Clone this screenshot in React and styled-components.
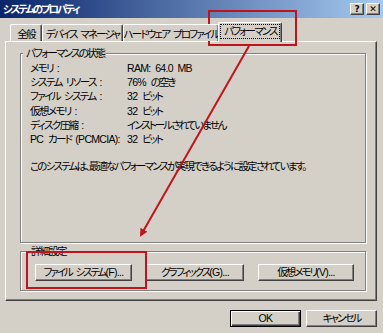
import React from 'react'
import styled, { createGlobalStyle } from 'styled-components'

const Global = createGlobalStyle`
  html, body {
    margin: 0;
    padding: 0;
    background: #d4d0c8;
  }
  body {
    font-family: "Liberation Sans", "Noto Sans CJK JP", sans-serif;
    font-size: 10.5px;
    font-feature-settings: "palt";
    letter-spacing: -1.8px;
    word-spacing: 2.5px;
    color: #000;
  }
`

const Window = styled.div`
  position: relative;
  width: 383px;
  height: 333px;
  background: #d4d0c8;
  overflow: hidden;
`

const TitleBar = styled.div`
  height: 18px;
  display: flex;
  align-items: center;
  justify-content: space-between;
  padding: 0 3px 0 3px;
  background: linear-gradient(to right, #0a246a, #a6caf0);
  color: #fff;
  font-weight: bold;
  font-size: 10.5px;
  letter-spacing: -2.2px;
`

const TitleText = styled.span`
  line-height: 18px;
`

const TitleButtons = styled.div`
  display: flex;
  gap: 2px;
`

const TitleButton = styled.div`
  width: 14px;
  height: 12px;
  box-sizing: border-box;
  background: #d4d0c8;
  border-top: 1px solid #fff;
  border-left: 1px solid #fff;
  border-right: 1px solid #404040;
  border-bottom: 1px solid #404040;
  box-shadow: inset -1px -1px 0 #808080;
  color: #000;
  font-family: "DejaVu Sans", sans-serif;
  font-size: 9px;
  font-weight: bold;
  letter-spacing: 0;
  line-height: 10px;
  text-align: center;
`

const TabRow = styled.div`
  display: flex;
  align-items: flex-end;
  height: 19px;
  margin-top: 4px;
  padding-left: 10px;
  position: relative;
  z-index: 1;
`

const Tab = styled.div`
  box-sizing: border-box;
  width: ${p => p.$w}px;
  height: ${p => (p.$active ? 20 : 17)}px;
  margin-bottom: ${p => (p.$active ? -1 : 0)}px;
  margin-left: ${p => (p.$active ? -1 : 0)}px;
  background: #d4d0c8;
  border-top: 1px solid #fff;
  border-left: 1px solid #fff;
  border-right: 1px solid #404040;
  border-radius: 2px 2px 0 0;
  box-shadow: inset -1px 0 0 #808080;
  display: flex;
  align-items: center;
  justify-content: center;
  padding-bottom: ${p => (p.$active ? 2 : 0)}px;
  white-space: nowrap;
`

const Focus = styled.span`
  outline: 1px dotted #000;
  outline-offset: 0;
  padding: 0 2px 0 3px;
  line-height: 13px;
`

const Panel = styled.div`
  box-sizing: border-box;
  width: 372px;
  margin-left: 5px;
  padding: 4px 10px 9px 14px;
  border-top: 1px solid #fff;
  border-left: 1px solid #fff;
  border-right: 1px solid #404040;
  border-bottom: 1px solid #404040;
  box-shadow: inset -1px -1px 0 #808080;
`

const Group = styled.fieldset`
  box-sizing: border-box;
  margin: ${p => p.$top}px 0 0;
  height: ${p => p.$h}px;
  padding: ${p => p.$pad};
  border: 1px solid #808080;
  box-shadow: 1px 1px 0 #fff, inset 1px 1px 0 #fff;
  min-width: 0;
`

const Legend = styled.legend`
  padding: 0 2px 0 3px;
  margin-left: -7px;
  line-height: 14px;
  background: #d4d0c8;
`

const StatusGrid = styled.div`
  display: grid;
  grid-template-columns: 97px 1fr;
  line-height: 14.2px;
`

const Label = styled.span`
  letter-spacing: -1.6px;
  white-space: nowrap;
`

const Value = styled.span`
  letter-spacing: -2px;
  white-space: nowrap;
`

const Latin = styled.span`
  letter-spacing: -0.7px;
`

const Message = styled.div`
  margin-top: 13px;
  line-height: 14px;
  letter-spacing: -1.8px;
  white-space: nowrap;
`

const ButtonRow = styled.div`
  display: flex;
  justify-content: ${p => p.$justify};
  gap: 5px;
`

const Button = styled.div`
  box-sizing: border-box;
  width: ${p => p.$w}px;
  height: 17px;
  background: #d4d0c8;
  border-top: 1px solid ${p => (p.$default ? '#000' : '#fff')};
  border-left: 1px solid ${p => (p.$default ? '#000' : '#fff')};
  border-right: 1px solid ${p => (p.$default ? '#000' : '#404040')};
  border-bottom: 1px solid ${p => (p.$default ? '#000' : '#404040')};
  box-shadow: ${p =>
    p.$default
      ? 'inset 1px 1px 0 #fff, inset -1px -1px 0 #404040, inset -2px -2px 0 #808080'
      : 'inset -1px -1px 0 #808080'};
  display: flex;
  align-items: center;
  justify-content: center;
  line-height: 13px;
  letter-spacing: -2px;
  white-space: nowrap;
`

const Footer = styled.div`
  width: 372px;
  margin: 9px 0 0 5px;
`

const Overlay = styled.svg`
  position: absolute;
  left: 0;
  top: 0;
  pointer-events: none;
`

const rows = [
  ['メモリ :', <Latin>RAM: 64.0 MB</Latin>],
  ['システム リソース :', <><Latin>76% </Latin>の空き</>],
  ['ファイル システム :', <><Latin>32 </Latin>ビット</>],
  ['仮想メモリ :', <><Latin>32 </Latin>ビット</>],
  ['ディスク圧縮 :', 'インストールされていません'],
  [<><Latin>PC </Latin>カード <Latin>(PCMCIA):</Latin></>, <><Latin>32 </Latin>ビット</>],
]

const tabs = [
  { label: '全般', w: 32 },
  { label: 'デバイス マネージャ', w: 81 },
  { label: 'ハードウェア プロファイル', w: 96 },
  { label: 'パフォーマンス', w: 64, active: true },
]

export default function App() {
  return (
    <>
      <Global />
      <Window>
        <TitleBar>
          <TitleText>システムのプロパティ</TitleText>
          <TitleButtons>
            <TitleButton>?</TitleButton>
            <TitleButton>✕</TitleButton>
          </TitleButtons>
        </TitleBar>

        <TabRow>
          {tabs.map(t => (
            <Tab key={t.label} $w={t.w} $active={t.active}>
              {t.active ? <Focus>{t.label}</Focus> : t.label}
            </Tab>
          ))}
        </TabRow>

        <Panel>
          <Group $top={0} $h={197} $pad="1px 8px 0 9px">
            <Legend>パフォーマンスの状態</Legend>
            <StatusGrid>
              {rows.map(([k, v], i) => (
                <React.Fragment key={i}>
                  <Label>{k}</Label>
                  <Value>{v}</Value>
                </React.Fragment>
              ))}
            </StatusGrid>
            <Message>
              このシステムは、最適なパフォーマンスが実現できるように設定されています。
            </Message>
          </Group>

          <Group $top={1} $h={47} $pad="6px 11px 8px 14px">
            <Legend>詳細設定</Legend>
            <ButtonRow $justify="space-between">
              <Button $w={97}>ファイル システム<Latin>(F)...</Latin></Button>
              <Button $w={98}>グラフィックス<Latin>(G)...</Latin></Button>
              <Button $w={96}>仮想メモリ<Latin>(V)...</Latin></Button>
            </ButtonRow>
          </Group>
        </Panel>

        <Footer>
          <ButtonRow $justify="flex-end">
            <Button $w={71} $default><Latin>OK</Latin></Button>
            <Button $w={71}>キャンセル</Button>
          </ButtonRow>
        </Footer>

        <Overlay width="383" height="333" viewBox="0 0 383 333">
          <defs>
            <marker id="head" markerWidth="8" markerHeight="8" refX="6" refY="4" orient="auto" markerUnits="userSpaceOnUse">
              <path d="M0,0 L8,4 L0,8 Z" fill="#c0141c" />
            </marker>
          </defs>
          <rect x="209" y="11" width="87" height="34" fill="none" stroke="#c0141c" strokeWidth="2" />
          <rect x="27" y="252" width="119" height="36" fill="none" stroke="#c0141c" strokeWidth="2" />
          <line x1="249" y1="46" x2="141" y2="235" stroke="#c0141c" strokeWidth="2" markerEnd="url(#head)" />
        </Overlay>
      </Window>
    </>
  )
}
